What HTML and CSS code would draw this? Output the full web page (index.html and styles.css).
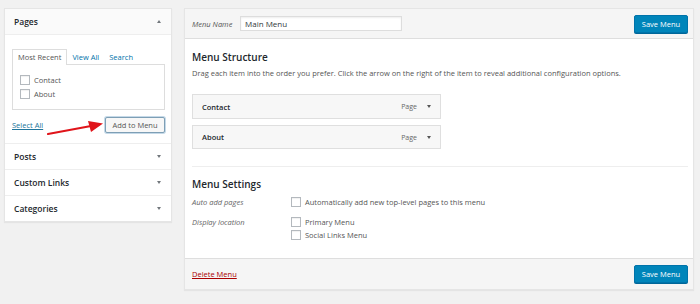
FILE: index.html
```html
<!DOCTYPE html>
<html>
<head>
<meta charset="utf-8">
<link rel="stylesheet" href="styles.css">
</head>
<body>
<div class="wrap">
  <div class="side">
    <div class="box">
      <div class="box-head"><span>Pages</span><span class="tri up"></span></div>
      <div class="box-body">
        <div class="tabs">
          <span class="tab active">Most Recent</span>
          <span class="tab">View All</span>
          <span class="tab">Search</span>
        </div>
        <div class="tab-panel">
          <label class="chk"><span class="cb"></span>Contact</label>
          <label class="chk"><span class="cb"></span>About</label>
        </div>
        <div class="actions">
          <a class="select-all">Select All</a>
          <button class="btn-add">Add to Menu</button>
          <svg class="arrow" width="60" height="16" viewBox="0 0 60 16">
            <line x1="1" y1="14" x2="44" y2="6" stroke="#e0141a" stroke-width="2.2" stroke-linecap="round"/>
            <polygon points="56,3.5 41,1 44,12" fill="#e0141a"/>
          </svg>
        </div>
      </div>
    </div>
    <div class="box-head closed"><span>Posts</span><span class="tri"></span></div>
    <div class="box-head closed"><span>Custom Links</span><span class="tri"></span></div>
    <div class="box-head closed last"><span>Categories</span><span class="tri"></span></div>
  </div>

  <div class="main">
    <div class="main-head">
      <label class="name-label">Menu Name</label>
      <input class="name-input" type="text" value="Main Menu">
      <button class="btn-primary">Save Menu</button>
    </div>
    <div class="main-body">
      <h3 class="title">Menu Structure</h3>
      <p class="desc">Drag each item into the order you prefer. Click the arrow on the right of the item to reveal additional configuration options.</p>
      <div class="items">
        <div class="item"><span class="item-title">Contact</span><span class="item-type">Page</span><span class="tri dark"></span></div>
        <div class="item"><span class="item-title">About</span><span class="item-type">Page</span><span class="tri dark"></span></div>
      </div>
      <div class="settings">
        <h3 class="title">Menu Settings</h3>
        <div class="row">
          <span class="row-label">Auto add pages</span>
          <div class="row-opts">
            <label class="chk"><span class="cb"></span>Automatically add new top-level pages to this menu</label>
          </div>
        </div>
        <div class="row">
          <span class="row-label">Display location</span>
          <div class="row-opts">
            <label class="chk"><span class="cb"></span>Primary Menu</label>
            <label class="chk"><span class="cb"></span>Social Links Menu</label>
          </div>
        </div>
      </div>
    </div>
    <div class="main-foot">
      <a class="delete">Delete Menu</a>
      <button class="btn-primary">Save Menu</button>
    </div>
  </div>
</div>
</body>
</html>
```

FILE: styles.css
```css
* { box-sizing: border-box; }
html, body { margin: 0; padding: 0; }
body {
  background: #f1f1f1;
  font-family: "Open Sans", "Noto Sans", sans-serif;
  font-size: 8px;
  color: #444;
  width: 700px;
  height: 304px;
  overflow: hidden;
}
.wrap {
  display: flex;
  align-items: flex-start;
  gap: 12px;
  padding: 8px 0 0 4px;
}
.side {
  width: 168px;
  background: #fff;
  border: 1px solid #e5e5e5;
  box-shadow: 0 1px 1px rgba(0,0,0,.05);
}
.box-head {
  height: 26px;
  display: flex;
  align-items: center;
  justify-content: space-between;
  padding: 0 9px 0 9px;
  font-weight: 600;
  font-size: 8.5px;
  color: #23282d;
  background: #fafafa;
  border-bottom: 1px solid #eee;
}
.box-head.closed { background: #fff; }
.box-head.last { border-bottom: none; height: 25px; }
.tri {
  width: 0; height: 0;
  border-left: 2.5px solid transparent;
  border-right: 2.5px solid transparent;
  border-top: 3.5px solid #72777c;
  margin-right: 1px;
}
.tri.up {
  border-top: none;
  border-bottom: 3.5px solid #72777c;
}
.tri.dark { border-top-color: #555; }
.box-body {
  padding: 14px 6px 10px 7px;
  border-bottom: 1px solid #eee;
}
.tabs {
  display: flex;
  align-items: flex-end;
  height: 15px;
}
.tab {
  color: #0073aa;
  padding: 0 5px 0 6px;
  line-height: 14px;
  font-size: 7.5px;
}
.tab.active {
  color: #555;
  border: 1px solid #ddd;
  border-bottom: none;
  background: #fff;
  padding: 0 5px;
  height: 16px;
  line-height: 15px;
  position: relative;
  top: 1px;
}
.tab + .tab:not(.active) { padding-left: 5px; }
.tab-panel {
  border: 1px solid #ddd;
  height: 46px;
  padding: 10px 7px 0 7px;
  display: flex;
  flex-direction: column;
  gap: 4px;
}
.chk {
  display: flex;
  align-items: center;
  gap: 4px;
  font-size: 7.5px;
  color: #555;
  height: 10px;
}
.cb {
  width: 10px;
  height: 10px;
  border: 1px solid #b4b9be;
  background: #fff;
  box-shadow: inset 0 1px 1px rgba(0,0,0,.06);
  flex: none;
}
.actions {
  position: relative;
  display: flex;
  justify-content: space-between;
  align-items: center;
  margin-top: 7px;
  height: 16px;
}
.select-all {
  color: #21759b;
  text-decoration: underline;
  font-size: 7.5px;
}
.btn-add {
  width: 60px;
  height: 16px;
  padding: 0;
  font-family: inherit;
  font-size: 7.5px;
  color: #555;
  background: #f7f7f7;
  border: 1px solid #7e9fb5;
  border-radius: 2px;
  box-shadow: 0 0 0 1px #c5d9e8;
}
.arrow {
  position: absolute;
  left: 35px;
  top: 3px;
}

.main {
  width: 510px;
  background: #fff;
  border: 1px solid #e5e5e5;
  box-shadow: 0 1px 1px rgba(0,0,0,.05);
}
.main-head {
  height: 30px;
  background: #f5f5f5;
  border-bottom: 1px solid #dedede;
  display: flex;
  align-items: center;
  padding: 0 5px 0 7px;
}
.name-label {
  font-style: italic;
  font-size: 7.5px;
  color: #555;
  width: 48px;
}
.name-input {
  width: 162px;
  height: 15px;
  border: 1px solid #ddd;
  box-shadow: inset 0 1px 2px rgba(0,0,0,.07);
  font-family: inherit;
  font-size: 8px;
  color: #32373c;
  padding: 0 4px;
  margin: 0;
}
.btn-primary {
  margin-left: auto;
  width: 54px;
  height: 18px;
  padding: 0;
  background: #0085ba;
  border: 1px solid #0073aa;
  border-radius: 2px;
  box-shadow: 0 1px 0 #006799;
  color: #fff;
  font-family: inherit;
  font-size: 7.5px;
}
.main-body {
  padding: 11px 5px 0 7px;
  height: 219px;
}
.title {
  margin: 0;
  font-size: 10px;
  font-weight: 600;
  color: #23282d;
  line-height: 14px;
}
.desc {
  margin: 4px 0 0 0;
  font-size: 7.5px;
  line-height: 11px;
  color: #555;
}
.items {
  margin-top: 15px;
  display: flex;
  flex-direction: column;
  gap: 6px;
  width: 249px;
}
.item {
  height: 25px;
  background: #f7f7f7;
  border: 1px solid #dfdfdf;
  display: flex;
  align-items: center;
  padding: 0 8px 0 9px;
  font-size: 7.5px;
}
.item + .item { height: 24px; }
.item-title { font-weight: 600; color: #23282d; flex: 1; }
.item-type { color: #666; margin-right: 10px; font-size: 7px; }
.settings {
  margin-top: 17px;
  border-top: 1px solid #eee;
  padding-top: 10px;
}
.row {
  display: flex;
  margin-top: 6px;
}
.row + .row { margin-top: 10px; }
.row-label {
  width: 99px;
  font-style: italic;
  font-size: 7.5px;
  color: #666;
  line-height: 10px;
}
.row-opts {
  display: flex;
  flex-direction: column;
  gap: 3px;
}
.main-foot {
  height: 31px;
  background: #f5f5f5;
  border-top: 1px solid #dedede;
  display: flex;
  align-items: center;
  padding: 0 5px 0 7px;
}
.delete {
  color: #a00;
  text-decoration: underline;
  font-size: 7.5px;
}
```
